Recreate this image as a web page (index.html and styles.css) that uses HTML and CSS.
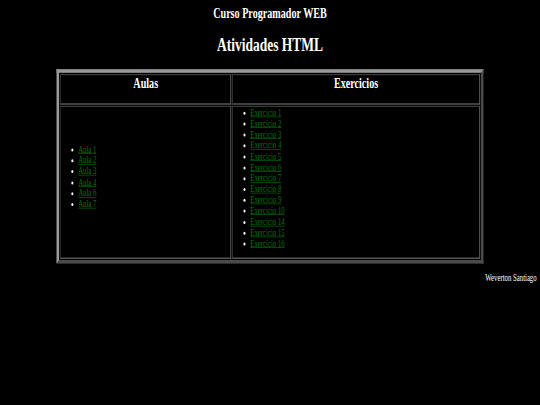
FILE: index.html
```html
<!DOCTYPE html>
<html lang="pt-BR">
<head>
<meta charset="utf-8">
<title>Atividades HTML</title>
<link rel="stylesheet" href="styles.css">
</head>
<body>
<div class="viewport">
<div class="page">
  <h2 class="site-title">Curso Programador WEB</h2>
  <h1 class="page-title">Atividades HTML</h1>
  <table class="activities">
    <colgroup><col class="col-aulas"><col class="col-ex"></colgroup>
    <thead>
      <tr><th>Aulas</th><th>Exercicios</th></tr>
    </thead>
    <tbody>
      <tr>
        <td class="cell-aulas">
          <ul class="list list-aulas">
            <li><a href="#">Aula 1</a></li>
            <li><a href="#">Aula 2</a></li>
            <li><a href="#">Aula 3</a></li>
            <li><a href="#">Aula 4</a></li>
            <li><a href="#">Aula 6</a></li>
            <li><a href="#">Aula 7</a></li>
          </ul>
        </td>
        <td class="cell-ex">
          <ul class="list list-ex">
            <li><a href="#">Exercicio 1</a></li>
            <li><a href="#">Exercicio 2</a></li>
            <li><a href="#">Exercicio 3</a></li>
            <li><a href="#">Exercicio 4</a></li>
            <li><a href="#">Exercicio 5</a></li>
            <li><a href="#">Exercicio 6</a></li>
            <li><a href="#">Exercicio 7</a></li>
            <li><a href="#">Exercicio 8</a></li>
            <li><a href="#">Exercicio 9</a></li>
            <li><a href="#">Exercicio 10</a></li>
            <li><a href="#">Exercicio 14</a></li>
            <li><a href="#">Exercicio 15</a></li>
            <li><a href="#">Exercicio 16</a></li>
          </ul>
        </td>
      </tr>
    </tbody>
  </table>
  <p class="author">Weverton Santiago</p>
</div>
</div>
</body>
</html>
```

FILE: styles.css
```css
html, body {
  margin: 0;
  padding: 0;
  background: #000;
  overflow: hidden;
}

body {
  color: #fff;
  font-family: "Liberation Serif", "Times New Roman", serif;
}

.viewport {
  width: 540px;
  height: 405px;
  overflow: hidden;
}

/* The page is laid out at 1280x675 and shown scaled into the 540x405 frame */
.page {
  width: 1280px;
  height: 675px;
  box-sizing: border-box;
  padding: 0 8px;
  transform: scale(0.421875, 0.6);
  transform-origin: 0 0;
}

.site-title {
  margin: 5px 0 0;
  font-size: 24px;
  line-height: 28px;
  font-weight: bold;
  text-align: center;
}

.page-title {
  margin: 20px 0 0;
  font-size: 32px;
  line-height: 37px;
  font-weight: bold;
  text-align: center;
}

.activities {
  width: 80%;
  margin: 22px auto 0;
  table-layout: fixed;
  border-collapse: separate;
  border-spacing: 2px;
  border: 6px solid;
  border-color: #9a9a9a #4a4a4a #4a4a4a #9a9a9a;
  background: #000;
}

.col-aulas {
  width: 406px;
}

.activities th,
.activities td {
  border: 2px solid;
  border-color: #3a3a3a #6a6a6a #6a6a6a #3a3a3a;
  padding: 1px;
}

.activities th {
  padding: 0 1px 21px;
  font-size: 24px;
  line-height: 26px;
  font-weight: bold;
  text-align: center;
  vertical-align: top;
}

.activities td {
  vertical-align: middle;
}

.list {
  padding-left: 40px;
  font-size: 16px;
  line-height: 18.15px;
}

.list-aulas {
  margin: 0 0 18px;
}

.list-ex {
  margin: 0 0 13px;
}

.list li {
  color: #fff;
}

.list a {
  color: #0a730a;
  text-decoration: underline;
}

.author {
  margin: 15px 0 0;
  font-size: 16px;
  line-height: 18px;
  text-align: right;
}
```
